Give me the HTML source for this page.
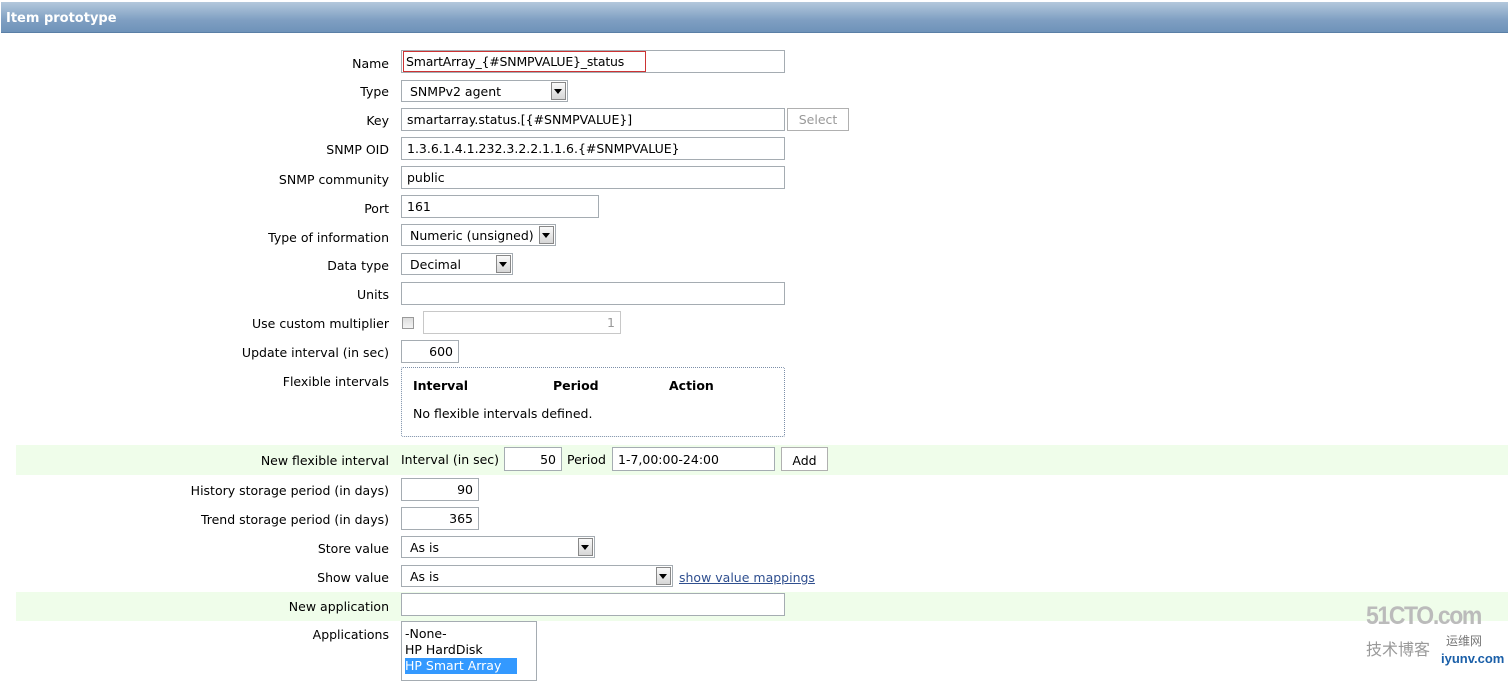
<!DOCTYPE html>
<html><head><style>
body{margin:0;width:1508px;height:676px;background:#fff;position:relative;overflow:hidden;font-family:"DejaVu Sans","Liberation Sans",sans-serif;font-size:12.5px;color:#000}
.a{position:absolute}
.hdr{left:1px;top:2px;width:1507px;height:31px;background:linear-gradient(#b3c8dc,#7f9fc2 60%,#6e93b9);border-bottom:1px solid #5a7fa6;color:#fff;font-weight:bold;font-size:13px;line-height:33px;box-sizing:border-box;padding-left:5px;font-family:"DejaVu Sans",sans-serif}
.l{right:1119px;text-align:right;white-space:nowrap;font-size:12.5px;margin-top:1px}
.i{border:1px solid #a5acb2;box-sizing:border-box;background:#fff;padding-left:5px;white-space:nowrap;font-size:12.5px}
.r{text-align:right;padding-right:5px}
.s::after{content:"";position:absolute;right:1px;top:1px;width:15px;bottom:1px;background:linear-gradient(#fafafa,#d6d6d6);border:1px solid #888;box-sizing:border-box}
.s::before{content:"";position:absolute;right:5px;top:50%;margin-top:-2px;border:4px solid transparent;border-top:5px solid #000;z-index:2;border-bottom:0}
.g{left:16px;width:1492px;background:#effdea}
.btn{border:1px solid #b0b0b0;box-sizing:border-box;background:#fff;text-align:center}
</style></head><body>
<div class="a hdr">Item prototype</div>
<div class="a g" style="top:445px;height:30px"></div>
<div class="a g" style="top:592px;height:29px"></div>

<div class="a l" style="top:55px">Name</div>
<div class="a i" style="left:401px;top:50px;width:384px;height:23px"></div>
<div class="a" style="left:403px;top:51px;width:243px;height:21px;border:1px solid #c33;box-sizing:border-box;padding-left:2px;line-height:20px;letter-spacing:-0.2px">SmartArray_{#SNMPVALUE}_status</div>

<div class="a l" style="top:83px">Type</div>
<div class="a i s" style="left:401px;top:80px;width:167px;height:22px;line-height:21px;padding-left:8px">SNMPv2 agent</div>

<div class="a l" style="top:112px">Key</div>
<div class="a i" style="left:401px;top:108px;width:384px;height:23px;line-height:22px">smartarray.status.[{#SNMPVALUE}]</div>
<div class="a btn" style="left:787px;top:108px;width:62px;height:23px;line-height:22px;color:#999">Select</div>

<div class="a l" style="top:141px">SNMP OID</div>
<div class="a i" style="left:401px;top:137px;width:384px;height:23px;line-height:22px">1.3.6.1.4.1.232.3.2.2.1.1.6.{#SNMPVALUE}</div>

<div class="a l" style="top:171px">SNMP community</div>
<div class="a i" style="left:401px;top:166px;width:384px;height:23px;line-height:22px">public</div>

<div class="a l" style="top:200px">Port</div>
<div class="a i" style="left:401px;top:195px;width:198px;height:23px;line-height:22px">161</div>

<div class="a l" style="top:229px">Type of information</div>
<div class="a i s" style="left:401px;top:224px;width:155px;height:22px;line-height:21px;padding-left:8px">Numeric (unsigned)</div>

<div class="a l" style="top:257px">Data type</div>
<div class="a i s" style="left:401px;top:253px;width:112px;height:22px;line-height:21px;padding-left:8px">Decimal</div>

<div class="a l" style="top:286px">Units</div>
<div class="a i" style="left:401px;top:282px;width:384px;height:23px"></div>

<div class="a l" style="top:315px">Use custom multiplier</div>
<div class="a" style="left:402px;top:317px;width:12px;height:12px;border:1px solid #999;box-sizing:border-box;background:linear-gradient(#ddd,#f4f4f4)"></div>
<div class="a i r" style="left:423px;top:311px;width:198px;height:23px;line-height:22px;color:#999;border-color:#c8c8c8">1</div>

<div class="a l" style="top:344px">Update interval (in sec)</div>
<div class="a i r" style="left:401px;top:340px;width:58px;height:23px;line-height:22px">600</div>

<div class="a l" style="top:373px">Flexible intervals</div>
<div class="a" style="left:401px;top:367px;width:384px;height:70px;border:1px dotted #7b8ea8;box-sizing:border-box;border-radius:2px"></div>
<div class="a" style="left:413px;top:378px;font-weight:bold">Interval</div>
<div class="a" style="left:553px;top:378px;font-weight:bold">Period</div>
<div class="a" style="left:669px;top:378px;font-weight:bold">Action</div>
<div class="a" style="left:413px;top:406px">No flexible intervals defined.</div>

<div class="a l" style="top:452px">New flexible interval</div>
<div class="a" style="left:401px;top:452px">Interval (in sec)</div>
<div class="a i r" style="left:504px;top:447px;width:58px;height:24px;line-height:23px">50</div>
<div class="a" style="left:567px;top:452px">Period</div>
<div class="a i" style="left:612px;top:447px;width:163px;height:24px;line-height:23px">1-7,00:00-24:00</div>
<div class="a btn" style="left:781px;top:447px;width:47px;height:24px;line-height:25px">Add</div>

<div class="a l" style="top:482px">History storage period (in days)</div>
<div class="a i r" style="left:401px;top:478px;width:78px;height:23px;line-height:22px">90</div>
<div class="a l" style="top:511px">Trend storage period (in days)</div>
<div class="a i r" style="left:401px;top:507px;width:78px;height:23px;line-height:22px">365</div>

<div class="a l" style="top:540px">Store value</div>
<div class="a i s" style="left:401px;top:536px;width:194px;height:22px;line-height:21px;padding-left:8px">As is</div>
<div class="a l" style="top:569px">Show value</div>
<div class="a i s" style="left:401px;top:565px;width:272px;height:22px;line-height:21px;padding-left:8px">As is</div>
<div class="a" style="left:679px;top:570px;color:#2f4f8f;text-decoration:underline">show value mappings</div>

<div class="a l" style="top:598px">New application</div>
<div class="a i" style="left:401px;top:593px;width:384px;height:23px"></div>

<div class="a l" style="top:626px">Applications</div>
<div class="a i" style="left:401px;top:621px;width:136px;height:60px;padding:4px 0 0 3px;line-height:16px">
<div>-None-</div><div>HP HardDisk</div><div style="background:#3399ff;color:#fff;width:112px">HP Smart Array</div></div>

<div class="a" style="left:1366px;top:602px;font:bold 25px 'Liberation Sans',sans-serif;color:#bbb;letter-spacing:-1.5px;transform:scaleX(0.92);transform-origin:left">51CTO.com</div>
<div class="a" style="left:1366px;top:636px;font:16px 'Noto Sans CJK SC',sans-serif;color:#999">技术博客</div>
<div class="a" style="left:1446px;top:632px;font:12px 'Noto Sans CJK SC',sans-serif;color:#777">运维网</div>
<div class="a" style="left:1441px;top:651px;font:bold 13px 'Liberation Sans',sans-serif;color:#1a5fa8">iyunv.com</div>
</body></html>
